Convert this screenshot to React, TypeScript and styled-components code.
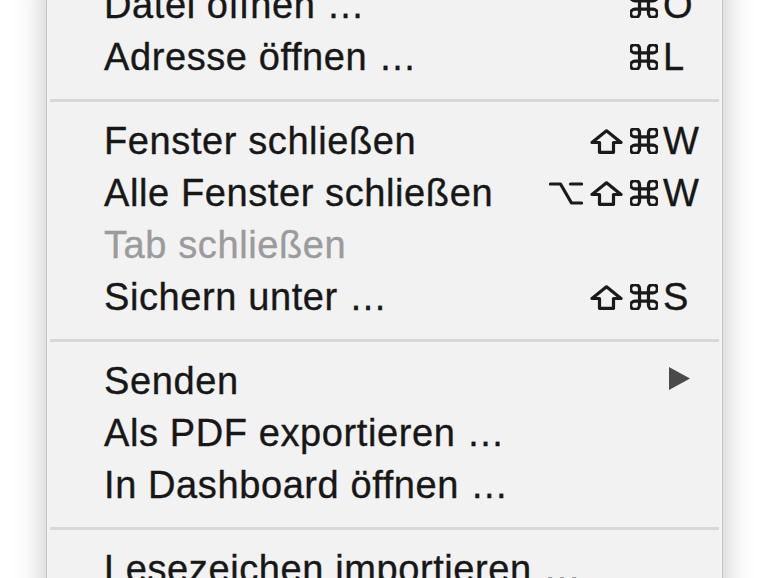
import React from 'react';
import styled, { createGlobalStyle } from 'styled-components';

type Mod = 'opt' | 'shift' | 'cmd';

type Entry =
  | { kind: 'item'; label: string; mods?: Mod[]; keyChar?: string; disabled?: boolean; submenu?: boolean }
  | { kind: 'sep' };

const entries: Entry[] = [
  { kind: 'item', label: 'Datei öffnen …', mods: ['cmd'], keyChar: 'O' },
  { kind: 'item', label: 'Adresse öffnen …', mods: ['cmd'], keyChar: 'L' },
  { kind: 'sep' },
  { kind: 'item', label: 'Fenster schließen', mods: ['shift', 'cmd'], keyChar: 'W' },
  { kind: 'item', label: 'Alle Fenster schließen', mods: ['opt', 'shift', 'cmd'], keyChar: 'W' },
  { kind: 'item', label: 'Tab schließen', disabled: true },
  { kind: 'item', label: 'Sichern unter …', mods: ['shift', 'cmd'], keyChar: 'S' },
  { kind: 'sep' },
  { kind: 'item', label: 'Senden', submenu: true },
  { kind: 'item', label: 'Als PDF exportieren …' },
  { kind: 'item', label: 'In Dashboard öffnen …' },
  { kind: 'sep' },
  { kind: 'item', label: 'Lesezeichen importieren …' },
];

const GlobalStyle = createGlobalStyle`
  html, body {
    margin: 0;
    padding: 0;
    background: #ffffff;
    overflow: hidden;
  }
  body {
    font-family: "Liberation Sans", Arial, sans-serif;
  }
`;

const Screen = styled.div`
  width: 770px;
  height: 578px;
  overflow: hidden;
  padding-left: 46px;
  box-sizing: border-box;
`;

const Menu = styled.div`
  width: 677px;
  margin-top: -28px;
  padding: 6px 0 40px;
  background: #f2f2f2;
  border: 1px solid #c6c6c6;
  box-sizing: border-box;
  box-shadow: 0 0 30px rgba(0, 0, 0, 0.24);
`;

const Row = styled.div<{ $disabled?: boolean }>`
  display: flex;
  align-items: center;
  height: 52px;
  padding: 0 16px 0 57px;
  font-size: 38px;
  letter-spacing: 0.6px;
  color: ${({ $disabled }) => ($disabled ? '#9b9b9b' : '#171717')};
  -webkit-text-stroke: 0.35px ${({ $disabled }) => ($disabled ? '#9b9b9b' : '#171717')};
`;

const Label = styled.span`
  flex: 1;
  white-space: nowrap;
`;

const Shortcut = styled.span`
  display: flex;
  align-items: center;
`;

const Mods = styled.span`
  display: flex;
  align-items: center;
  justify-content: flex-end;
  gap: 7px;
  margin-right: 5px;
`;

const Key = styled.span`
  width: 43px;
`;

const Glyph = styled.svg`
  display: block;
  fill: none;
  stroke: #1a1a1a;
  stroke-width: 3.2px;
  stroke-linecap: round;
  stroke-linejoin: round;
`;

const Arrow = styled.svg`
  width: 22px;
  height: 23px;
  margin: 0 16px 6px 0;
`;

const Separator = styled.div`
  height: 3px;
  margin: 16px 3px 13px;
  background: #d8d8d8;
`;

function ModGlyph({ mod }: { mod: Mod }) {
  if (mod === 'opt') {
    return (
      <Glyph width="34" height="25" viewBox="0 0 34 25">
        <path d="M1.5 3 H11.5 L22.5 22 H32.5" />
        <path d="M21.5 3 H32.5" />
      </Glyph>
    );
  }
  if (mod === 'shift') {
    return (
      <Glyph width="33" height="25" viewBox="0 0 33 25">
        <path d="M16.5 1.8 L31 13.5 H23.5 V23.3 H9.5 V13.5 H2 Z" />
      </Glyph>
    );
  }
  return (
    <Glyph width="28" height="26" viewBox="2.6 2.6 18.8 18.8" preserveAspectRatio="none">
      <path
        vectorEffect="non-scaling-stroke"
        d="M15 6v12a3 3 0 1 0 3-3H6a3 3 0 1 0 3 3V6a3 3 0 1 0-3 3h12a3 3 0 1 0-3-3"
      />
    </Glyph>
  );
}

function MenuRow({ entry }: { entry: Extract<Entry, { kind: 'item' }> }) {
  return (
    <Row $disabled={entry.disabled}>
      <Label>{entry.label}</Label>
      {entry.keyChar && (
        <Shortcut>
          <Mods>
            {entry.mods?.map((m) => (
              <ModGlyph key={m} mod={m} />
            ))}
          </Mods>
          <Key>{entry.keyChar}</Key>
        </Shortcut>
      )}
      {entry.submenu && (
        <Arrow viewBox="0 0 22 23">
          <path d="M1 0 L22 11.5 L1 23 Z" fill="#4a4a4a" />
        </Arrow>
      )}
    </Row>
  );
}

export default function App() {
  return (
    <Screen>
      <GlobalStyle />
      <Menu>
        {entries.map((entry, i) =>
          entry.kind === 'sep' ? <Separator key={i} /> : <MenuRow key={i} entry={entry} />
        )}
      </Menu>
    </Screen>
  );
}
